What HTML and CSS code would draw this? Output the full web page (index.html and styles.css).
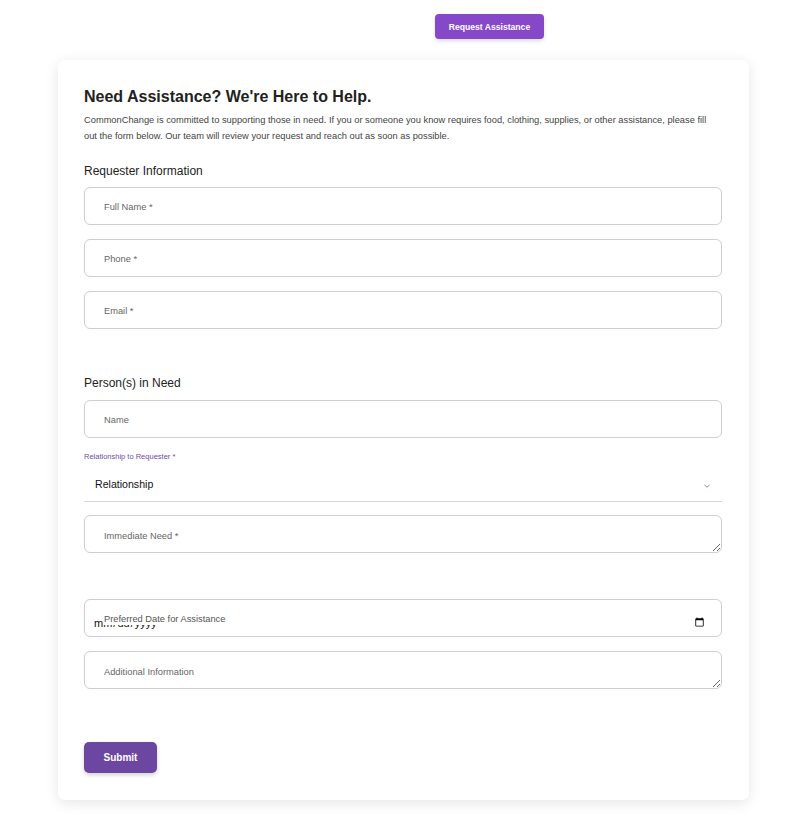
FILE: index.html
```html
<!DOCTYPE html>
<html>
<head>
<meta charset="utf-8">
<link rel="stylesheet" href="styles.css">
</head>
<body>
<header class="topbar">
  <button class="req-btn">Request Assistance</button>
</header>
<main class="card">
  <h1 class="title">Need Assistance? We're Here to Help.</h1>
  <p class="intro">CommonChange is committed to supporting those in need. If you or someone you know requires food, clothing, supplies, or other assistance, please fill out the form below. Our team will review your request and reach out as soon as possible.</p>

  <h2 class="section">Requester Information</h2>
  <div class="fields">
    <input class="field" placeholder="Full Name *">
    <input class="field" placeholder="Phone *">
    <input class="field" placeholder="Email *">
  </div>

  <h2 class="section section-2">Person(s) in Need</h2>
  <div class="fields">
    <input class="field" placeholder="Name">
  </div>
  <div class="select-wrap">
    <label class="small-label">Relationship to Requester *</label>
    <div class="select">
      <span>Relationship</span>
      <svg class="chev" width="8" height="6" viewBox="0 0 8 6"><path d="M1.5 2 L4 4.2 L6.5 2" fill="none" stroke="#9b7fd1" stroke-width="1"/></svg>
    </div>
  </div>
  <div class="fields">
    <textarea class="field area" placeholder="Immediate Need *"></textarea>
  </div>

  <div class="fields date-block">
    <div class="date-wrap">
      <input class="field date" type="date">
      <span class="date-label">Preferred Date for Assistance</span>
    </div>
    <textarea class="field area" placeholder="Additional Information"></textarea>
  </div>

  <button class="submit">Submit</button>
</main>
</body>
</html>
```
FILE: styles.css
```css
* { box-sizing: border-box; }
body {
  margin: 0;
  background: #fff;
  font-family: "Liberation Sans", Arial, sans-serif;
  color: #222;
}
.topbar {
  display: flex;
  padding: 14px 0 0 435px;
  height: 60px;
}
.req-btn {
  width: 109px;
  height: 25px;
  border: none;
  border-radius: 4px;
  background: #8747c9;
  color: #fff;
  font-family: "Liberation Sans", Arial, sans-serif;
  font-size: 8.6px;
  font-weight: bold;
  box-shadow: 0 2px 4px rgba(0,0,0,0.15);
  padding: 0;
}
.card {
  width: 691px;
  margin: 0 auto 28px;
  background: #fff;
  border-radius: 7px;
  box-shadow: 0 3px 14px rgba(0,0,0,0.1);
  padding: 27px 27px 27px 26px;
}
.title {
  margin: 0;
  font-size: 16px;
  font-weight: bold;
  color: #222;
  line-height: 19px;
}
.intro {
  margin: 6px 0 0;
  max-width: 630px;
  font-size: 9.3px;
  line-height: 16px;
  color: #444;
}
.section {
  margin: 20px 0 9px;
  font-size: 12px;
  font-weight: normal;
  color: #222;
  line-height: 14px;
}
.section-2 { margin-top: 47px; margin-bottom: 10px; }
.fields {
  display: flex;
  flex-direction: column;
  gap: 14px;
}
.field {
  display: block;
  width: 100%;
  height: 38px;
  border: 1px solid #cfcfcf;
  border-radius: 6px;
  padding: 1px 19px 0;
  font-family: "Liberation Sans", Arial, sans-serif;
  font-size: 9.3px;
  color: #333;
  background: #fff;
  outline: none;
}
.field::placeholder { color: #666; }
.area {
  padding-top: 15px;
  resize: vertical;
}
.select-wrap {
  margin-top: 14px;
}
.small-label {
  display: block;
  font-size: 7.5px;
  color: #6f4ea8;
  line-height: 9px;
}
.select {
  display: flex;
  align-items: center;
  justify-content: space-between;
  height: 41px;
  padding: 6px 11px 0 11px;
  border-bottom: 1px solid #d8d8d8;
  font-size: 10.6px;
  color: #111;
}
.chev { margin-top: 4px; }
.select-wrap + .fields { margin-top: 13px; }
.date-block { margin-top: 46px; }
.date-wrap { position: relative; }
.date {
  padding: 9px 14px 0 8px;
  font-size: 11px;
  color: #111;
}
.date-label {
  position: absolute;
  left: 19px;
  top: 14px;
  padding: 0 1px;
  font-size: 9.3px;
  line-height: 12px;
  color: #555;
  background: #fff;
}
.submit {
  margin-top: 53px;
  width: 73px;
  height: 31px;
  border: none;
  border-radius: 5px;
  background: #6b47a1;
  color: #fff;
  font-family: "Liberation Sans", Arial, sans-serif;
  font-size: 10px;
  font-weight: bold;
  box-shadow: 0 2px 4px rgba(0,0,0,0.18);
}
```
